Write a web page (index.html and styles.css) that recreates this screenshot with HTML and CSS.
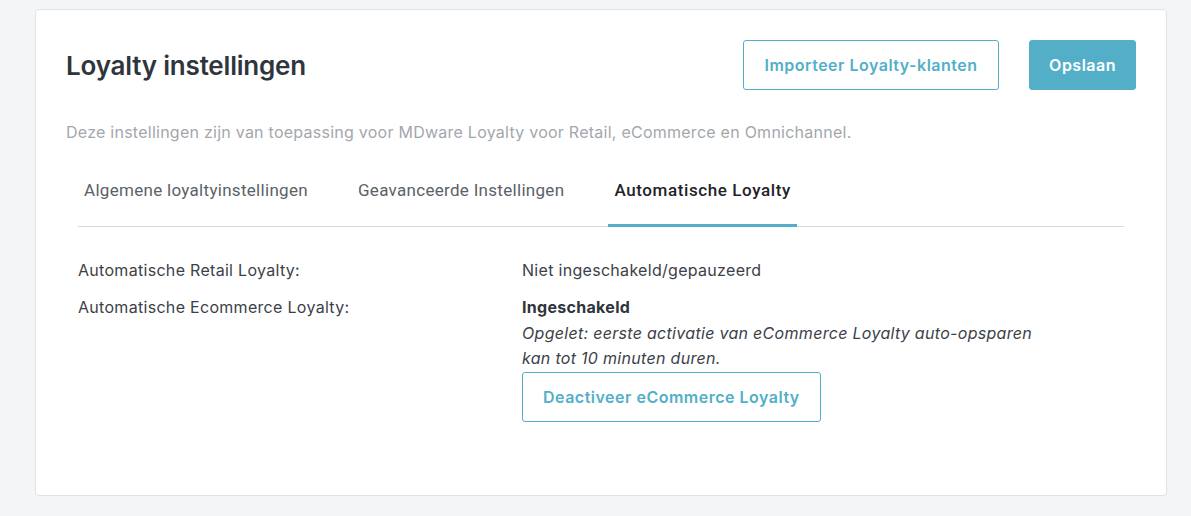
FILE: index.html
```html
<!DOCTYPE html>
<html lang="nl">
<head>
<meta charset="utf-8">
<title>Loyalty instellingen</title>
<link rel="stylesheet" href="styles.css">
</head>
<body>
<div class="page">
  <section class="card">
    <header class="card-header">
      <h1 class="title">Loyalty instellingen</h1>
      <div class="actions">
        <button class="btn btn-outline btn-import">Importeer Loyalty-klanten</button>
        <button class="btn btn-primary">Opslaan</button>
      </div>
    </header>
    <p class="description">Deze instellingen zijn van toepassing voor MDware Loyalty voor Retail, eCommerce en Omnichannel.</p>
    <div class="tabs-wrap">
      <nav class="tabs">
        <a class="tab">Algemene loyaltyinstellingen</a>
        <a class="tab">Geavanceerde Instellingen</a>
        <a class="tab active">Automatische Loyalty</a>
      </nav>
      <div class="settings">
        <div class="row">
          <div class="label">Automatische Retail Loyalty:</div>
          <div class="value">Niet ingeschakeld/gepauzeerd</div>
        </div>
        <div class="row">
          <div class="label">Automatische Ecommerce Loyalty:</div>
          <div class="value">
            <div class="status">Ingeschakeld</div>
            <div class="note">Opgelet: eerste activatie van eCommerce Loyalty auto-opsparen<br>kan tot 10 minuten duren.</div>
            <button class="btn btn-outline btn-deactivate">Deactiveer eCommerce Loyalty</button>
          </div>
        </div>
      </div>
    </div>
  </section>
</div>
</body>
</html>
```
FILE: styles.css
```css
* { box-sizing: border-box; }
html, body {
  margin: 0;
  padding: 0;
  background: #f4f5f7;
  font-family: Inter, "Noto Sans", sans-serif;
  color: #333a42;
}
.page {
  padding: 9px 24px 20px 35px;
}
.card {
  background: #fff;
  border: 1px solid #dfe2e6;
  border-radius: 4px;
  width: 1132px;
  height: 487px;
  padding: 30px 30px 0 30px;
}
.card-header {
  display: flex;
  align-items: center;
  justify-content: space-between;
  height: 50px;
}
.title {
  margin: 0;
  font-size: 26px;
  font-weight: 600;
  letter-spacing: -0.2px;
  color: #2f353c;
}
.actions {
  display: flex;
  gap: 30px;
}
.btn {
  font-family: Inter, "Noto Sans", sans-serif;
  font-size: 16px;
  font-weight: 600;
  letter-spacing: 0.5px;
  height: 50px;
  border-radius: 3px;
  padding: 0 20px;
  cursor: pointer;
}
.btn-outline {
  background: #fff;
  color: #52afc8;
  border: 1px solid #52afc8;
}
.btn-import {
  padding: 0 20.5px;
}
.btn-primary {
  background: #53afc8;
  color: #fff;
  border: 1px solid #53afc8;
  padding: 0 19px;
}
.description {
  margin: 30px 0 0 0;
  font-size: 16px;
  line-height: 24px;
  letter-spacing: 0.25px;
  color: #a3a7ac;
}
.tabs-wrap {
  margin: 0 12px;
}
.tabs {
  display: flex;
  gap: 38px;
  border-bottom: 1px solid #d6dadf;
  margin-top: 20px;
}
.tab {
  font-family: Roboto, sans-serif;
  font-size: 17px;
  letter-spacing: 0.3px;
  line-height: 24px;
  color: #5b6168;
  padding: 14px 6px 22px 6px;
  border-bottom: 3px solid transparent;
  margin-bottom: -1px;
}
.tab.active {
  color: #1f2328;
  font-weight: 500;
  letter-spacing: 0.6px;
  border-bottom-color: #53afc8;
}
.settings {
  padding-top: 31px;
}
.row {
  display: grid;
  grid-template-columns: 444px 1fr;
  font-size: 16px;
  line-height: 25.6px;
  letter-spacing: 0.3px;
  color: #3c4148;
  margin-bottom: 11.4px;
}
.status {
  font-weight: 700;
  color: #2f353c;
}
.note {
  font-style: italic;
}
.btn-deactivate {
  margin-top: 0;
}
```
